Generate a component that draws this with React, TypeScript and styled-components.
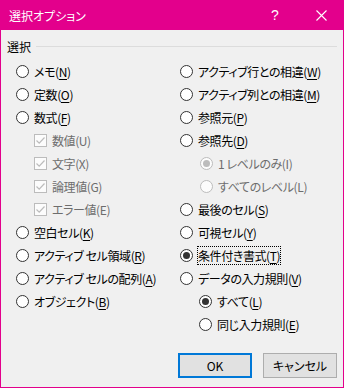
import React, { FC } from 'react';
import styled, { createGlobalStyle } from 'styled-components';

const GlobalStyle = createGlobalStyle`
    html, body {
        margin: 0;
        padding: 0;
        background: #f0f0f0;
    }
    body {
        font-family: 'Noto Sans CJK JP', 'Noto Sans', sans-serif;
        font-size: 12px;
        font-feature-settings: 'palt';
        color: #000;
    }
`;

const Dialog = styled.div`
    width: 344px;
    height: 388px;
    box-sizing: border-box;
    border: 1px solid #e3008c;
    border-top: none;
    background: #f0f0f0;
    display: flex;
    flex-direction: column;
`;

const TitleBar = styled.div`
    height: 30px;
    margin: 0 -1px;
    background: #e3008c;
    color: #fff;
    display: flex;
    align-items: center;
    padding-left: 9px;
    font-size: 12px;
`;

const Title = styled.div`
    flex: 1;
`;

const TitleButton = styled.div`
    width: 46px;
    height: 30px;
    display: flex;
    align-items: center;
    justify-content: center;
    font-family: 'Liberation Sans', sans-serif;
    font-size: 14px;
`;

const Body = styled.div`
    flex: 1;
    display: flex;
    flex-direction: column;
    padding: 8px 6px 0 6px;
`;

const GroupHeader = styled.div`
    display: flex;
    align-items: center;
    gap: 5px;
    height: 16px;
    margin-bottom: 6px;
`;

const GroupLine = styled.div`
    flex: 1;
    height: 1px;
    background: #dcdcdc;
`;

const Columns = styled.div`
    display: grid;
    grid-template-columns: 164px 1fr;
    padding-left: 9px;
`;

const Column = styled.div`
    display: flex;
    flex-direction: column;
`;

const Row = styled.div<{ $indent?: number }>`
    height: 23px;
    display: flex;
    align-items: center;
    padding-left: ${(p) => p.$indent ?? 0}px;
    letter-spacing: -0.4px;
`;

const RadioCircle = styled.span<{ $checked?: boolean; $disabled?: boolean }>`
    width: 13px;
    height: 13px;
    box-sizing: border-box;
    border-radius: 50%;
    border: 1px solid ${(p) => (p.$disabled ? '#bcbcbc' : '#333')};
    background: ${(p) => (p.$disabled ? '#fcfcfc' : '#fff')};
    display: flex;
    align-items: center;
    justify-content: center;
    margin-right: 5px;
    flex-shrink: 0;

    &::after {
        content: '';
        display: ${(p) => (p.$checked ? 'block' : 'none')};
        width: 7px;
        height: 7px;
        border-radius: 50%;
        background: ${(p) => (p.$disabled ? '#bcbcbc' : '#333')};
    }
`;

const CheckBox = styled.span`
    width: 13px;
    height: 13px;
    box-sizing: border-box;
    border: 1px solid #bcbcbc;
    background: #fcfcfc;
    margin-right: 5px;
    display: flex;
    align-items: center;
    justify-content: center;
    flex-shrink: 0;
`;

const Label = styled.span<{ $disabled?: boolean; $focused?: boolean }>`
    color: ${(p) => (p.$disabled ? '#6d6d6d' : '#000')};
    outline: ${(p) => (p.$focused ? '1px dotted #000' : 'none')};
    outline-offset: 0px;
    white-space: nowrap;
    line-height: 17px;
`;

const Key = styled.span`
    text-decoration: underline;
    text-underline-offset: 2px;
`;

const Footer = styled.div`
    margin-top: auto;
    display: flex;
    justify-content: flex-end;
    gap: 11px;
    padding: 0 6px 9px 0;
`;

const DialogButton = styled.button<{ $primary?: boolean }>`
    width: 74px;
    height: 25px;
    box-sizing: border-box;
    font-family: inherit;
    font-size: 12px;
    font-feature-settings: 'palt';
    color: #000;
    background: #e1e1e1;
    border: ${(p) => (p.$primary ? '2px solid #0078d7' : '1px solid #adadad')};
    padding: 0;
`;

type Item = {
    text: string;
    key?: string;
    kind: 'radio' | 'check';
    indent?: number;
    checked?: boolean;
    disabled?: boolean;
    focused?: boolean;
};

const left: Item[] = [
    { text: 'メモ', key: 'N', kind: 'radio' },
    { text: '定数', key: 'O', kind: 'radio' },
    { text: '数式', key: 'F', kind: 'radio' },
    { text: '数値(U)', kind: 'check', indent: 18, checked: true, disabled: true },
    { text: '文字(X)', kind: 'check', indent: 18, checked: true, disabled: true },
    { text: '論理値(G)', kind: 'check', indent: 18, checked: true, disabled: true },
    { text: 'エラー値(E)', kind: 'check', indent: 18, checked: true, disabled: true },
    { text: '空白セル', key: 'K', kind: 'radio' },
    { text: 'アクティブ セル領域', key: 'R', kind: 'radio' },
    { text: 'アクティブ セルの配列', key: 'A', kind: 'radio' },
    { text: 'オブジェクト', key: 'B', kind: 'radio' },
];

const right: Item[] = [
    { text: 'アクティブ行との相違', key: 'W', kind: 'radio' },
    { text: 'アクティブ列との相違', key: 'M', kind: 'radio' },
    { text: '参照元', key: 'P', kind: 'radio' },
    { text: '参照先', key: 'D', kind: 'radio' },
    { text: '1 レベルのみ(I)', kind: 'radio', indent: 20, checked: true, disabled: true },
    { text: 'すべてのレベル(L)', kind: 'radio', indent: 20, disabled: true },
    { text: '最後のセル', key: 'S', kind: 'radio' },
    { text: '可視セル', key: 'Y', kind: 'radio' },
    { text: '条件付き書式', key: 'T', kind: 'radio', checked: true, focused: true },
    { text: 'データの入力規則', key: 'V', kind: 'radio' },
    { text: 'すべて', key: 'L', kind: 'radio', indent: 19, checked: true },
    { text: '同じ入力規則', key: 'E', kind: 'radio', indent: 19 },
];

const CheckMark: FC = () => (
    <svg width="11" height="11" viewBox="0 0 11 11">
        <path d="M1.5 5.5 L4.2 8.2 L9.5 2.5" fill="none" stroke="#bcbcbc" strokeWidth="1.2" />
    </svg>
);

const OptionRow: FC<{ item: Item }> = ({ item }) => (
    <Row $indent={item.indent}>
        {item.kind === 'radio' ? (
            <RadioCircle $checked={item.checked} $disabled={item.disabled} />
        ) : (
            <CheckBox>{item.checked && <CheckMark />}</CheckBox>
        )}
        <Label $disabled={item.disabled} $focused={item.focused}>
            {item.text}
            {item.key && (
                <>
                    (<Key>{item.key}</Key>)
                </>
            )}
        </Label>
    </Row>
);

const App: FC = () => (
    <>
        <GlobalStyle />
        <Dialog>
            <TitleBar>
                <Title>選択オプション</Title>
                <TitleButton>?</TitleButton>
                <TitleButton>
                    <svg width="11" height="11" viewBox="0 0 11 11">
                        <path d="M0.5 0.5 L10.5 10.5 M10.5 0.5 L0.5 10.5" stroke="#fff" strokeWidth="1.1" />
                    </svg>
                </TitleButton>
            </TitleBar>
            <Body>
                <GroupHeader>
                    <span>選択</span>
                    <GroupLine />
                </GroupHeader>
                <Columns>
                    <Column>
                        {left.map((item) => (
                            <OptionRow key={item.text} item={item} />
                        ))}
                    </Column>
                    <Column>
                        {right.map((item) => (
                            <OptionRow key={item.text} item={item} />
                        ))}
                    </Column>
                </Columns>
            </Body>
            <Footer>
                <DialogButton $primary>OK</DialogButton>
                <DialogButton>キャンセル</DialogButton>
            </Footer>
        </Dialog>
    </>
);

export default App;
